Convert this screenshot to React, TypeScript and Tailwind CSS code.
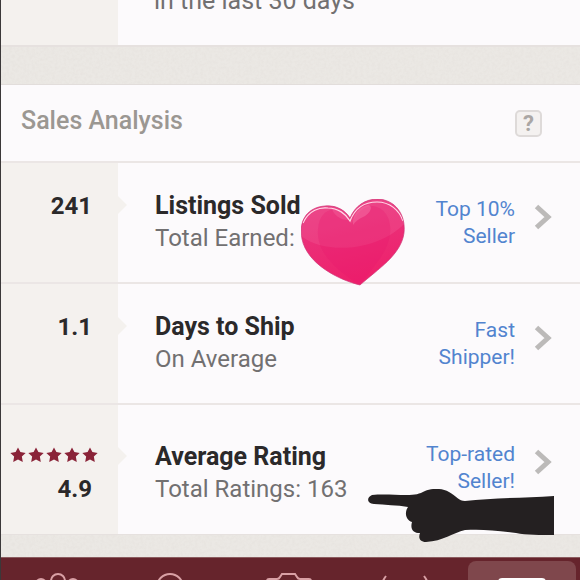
import type { ReactNode } from "react";
import clsx from "clsx";

type Stat = {
  value: string;
  stars?: number;
  title: string;
  detail: string;
  badge: [string, string];
  overlay?: ReactNode;
};

function Paper({ id, className }: { id: string; className: string }) {
  return (
    <div className={clsx("shrink-0 overflow-hidden bg-[#ebe8e4]", className)}>
      <svg className="block h-full w-full" aria-hidden="true">
        <filter id={id} x="0" y="0" width="100%" height="100%">
          <feTurbulence type="fractalNoise" baseFrequency="0.35" numOctaves="3" seed="4" />
          <feColorMatrix values="0 0 0 0 0.5  0 0 0 0 0.47  0 0 0 0 0.42  0.5 0 0 0 -0.17" />
        </filter>
        <rect width="100%" height="100%" filter={`url(#${id})`} opacity="0.3" />
      </svg>
    </div>
  );
}

function Star() {
  return (
    <svg viewBox="0 0 20 20" className="size-4" fill="#8a2338" aria-hidden="true">
      <path d="M10 .5l3 5.9 6.6 1-4.8 4.6 1.2 6.8-6-3.2-6 3.2 1.2-6.8L.4 7.4l6.6-1z" />
    </svg>
  );
}

function Chevron() {
  return (
    <svg viewBox="0 0 18 26" className="mb-3 h-[26px] w-[18px] shrink-0" fill="none" aria-hidden="true">
      <path d="M2.5 2.5L14 13 2.5 23.5" stroke="#bcbab9" strokeWidth="5" />
    </svg>
  );
}

function Heart() {
  return (
    <svg viewBox="0 0 104 87" className="absolute top-9 left-[183px] h-[87px] w-[104px]" aria-hidden="true">
      <defs>
        <linearGradient id="heart" x1="0" y1="0" x2="0.3" y2="1">
          <stop offset="0" stopColor="#e83b82" />
          <stop offset="1" stopColor="#ee216c" />
        </linearGradient>
        <clipPath id="heart-shape">
          <path d="M59 86C38 81 6 65 1 40C-3 20 8 8 24 7C35 6 44 11 49 19C54 7 64 0 77 0C94 1 105 15 103 34C100 56 77 70 59 86Z" />
        </clipPath>
      </defs>
      <g clipPath="url(#heart-shape)">
        <rect width="104" height="87" fill="url(#heart)" />
        <path d="M0 37C26 57 79 51 104 24V0H0Z" fill="#f477a8" opacity="0.22" />
        <path d="M59 86C33 70 15 52 17 30C18 17 25 11 31 11C40 11 47 18 51 25C55 14 63 7 72 7C84 9 91 20 89 35C87 53 73 67 59 86Z" fill="#e6156a" opacity="0.25" />
        <path d="M52 26C51 16 58 8 67 6C73 7 69 15 62 18C57 20 54 23 52 26Z" fill="#fa8db7" opacity="0.35" />
        <path d="M31 10C38 9 43 13 47 21C39 21 33 16 31 10Z" fill="#fa8db7" opacity="0.22" />
        <path d="M2 24C8 11 19 8 27 9C37 9 45 15 49 22C54 9 64 3 76 3C89 3 98 11 102 22" fill="none" stroke="#ffd9e8" strokeWidth="1.2" />
      </g>
      <path d="M59 86C38 81 6 65 1 40C-3 20 8 8 24 7C35 6 44 11 49 19C54 7 64 0 77 0C94 1 105 15 103 34C100 56 77 70 59 86Z" fill="none" stroke="#cf3877" strokeWidth="0.7" />
    </svg>
  );
}

function PointingHand() {
  return (
    <svg viewBox="0 0 186 53" className="absolute top-[84px] left-[250px] h-[53px] w-[186px]" fill="#242021" aria-hidden="true">
      <path d="M4 6C15 5 27 6 38 6C48 6 51 5 57 2C64-1 74-1 81 3C88 7 91 12 97 12C123 9 155 9 186 7V46C173 46 158 46 148 44C128 41 111 40 97 41C85 44 75 52 58 53C52 53 50 49 52 44C45 44 42 40 44 33C38 31 36 24 40 18C29 16 17 16 6 15C-2 14-1 8 4 6Z" />
    </svg>
  );
}

const stats: Stat[] = [
  { value: "241", title: "Listings Sold", detail: "Total Earned:", badge: ["Top 10%", "Seller"], overlay: <Heart /> },
  { value: "1.1", title: "Days to Ship", detail: "On Average", badge: ["Fast", "Shipper!"] },
  {
    value: "4.9",
    stars: 5,
    title: "Average Rating",
    detail: "Total Ratings: 163",
    badge: ["Top-rated", "Seller!"],
    overlay: <PointingHand />,
  },
];

function StatRow({ value, stars, title, detail, badge, overlay }: Stat) {
  return (
    <li className={clsx("flex", stars ? "h-[129px]" : "h-[121px] border-b-2 border-[#ebe6e5]")}>
      <div
        className={clsx(
          "flex w-[117px] shrink-0 flex-col bg-[#f4f1ee] text-right text-2xl leading-8 font-bold text-[#2b292a]",
          stars ? "pt-9" : "pt-[27px]",
        )}
      >
        {stars && (
          <span className="flex h-8 items-center justify-end gap-0.5 pr-5 pb-1">
            {Array.from({ length: stars }, (_, i) => (
              <Star key={i} />
            ))}
          </span>
        )}
        <span className="pr-[26px]">{value}</span>
      </div>
      <div className={clsx("relative flex min-w-0 flex-1 pr-7", stars ? "pt-9" : "pt-[27px]")}>
        <svg viewBox="0 0 9 18" className="mt-1.5 h-[18px] w-[9px] shrink-0" fill="#f4f1ee" aria-hidden="true">
          <path d="M0 0l9 9-9 9z" />
        </svg>
        <div className="ml-7 flex-1 leading-8 whitespace-nowrap">
          <h3 className="text-[25px] leading-8 font-bold text-[#2b292a]">{title}</h3>
          <p className="text-2xl leading-[33px] text-[#727071]">{detail}</p>
        </div>
        <a
          href="#details"
          className={clsx(
            "flex items-center gap-[19px] self-start text-right text-[21px] leading-[27px] text-[#5284cf]",
            !stars && "pt-1.5",
          )}
        >
          <span>
            {badge[0]}
            <br />
            {badge[1]}
          </span>
          <Chevron />
        </a>
        {overlay}
      </div>
    </li>
  );
}

const tabs = [
  {
    name: "Community",
    icon: (
      <>
        <circle cx="32" cy="9" r="7" />
        <circle cx="15" cy="12" r="5" />
        <circle cx="47" cy="12" r="5" />
      </>
    ),
  },
  { name: "Search", icon: <circle cx="28" cy="15" r="13" /> },
  { name: "Sell", icon: <path d="M10 30V9q0-2 2-2h8q2 0 3-2l2-3h13l2 3q1 2 3 2h9q2 0 2 2v21" /> },
  { name: "News", icon: <path d="M13 4Q5 14 13 25M51 4q8 10 0 21" /> },
];

export default function App() {
  return (
    <main className="flex h-screen flex-col overflow-hidden border-l border-[#3b3839] bg-[#fcfafc] font-[Roboto,sans-serif]">
      <section className="flex h-[47px] shrink-0 items-end overflow-hidden border-b-2 border-[#e6e1df]">
        <div className="h-full w-[117px] shrink-0 bg-[#f4f1ee]" />
        <p className="pb-7 pl-9 text-[25px] leading-8 text-[#727071]">in the last 30 days</p>
      </section>
      <Paper id="paper-top" className="h-[37px]" />

      <section className="shrink-0 border-t border-[#e2dddb]">
        <header className="flex h-[78px] items-center justify-between border-b-2 border-[#ebe6e5] pr-[38px] pl-5">
          <h2 className="pb-1 text-[25px] leading-8 font-medium text-[#9b9792]">Sales Analysis</h2>
          <button
            type="button"
            aria-label="Help"
            className="size-[27px] rounded-[5px] border-2 border-[#dedad9] bg-[#f4f1f0] text-[22px] leading-[23px] font-bold text-[#aaa6a4]"
          >
            ?
          </button>
        </header>
        <ul>
          {stats.map((stat) => (
            <StatRow key={stat.title} {...stat} />
          ))}
        </ul>
      </section>

      <Paper id="paper-bottom" className="h-[23px] border-t border-[#e6e1df]" />
      <nav className="grid h-24 shrink-0 grid-cols-5 border-t border-[#8b5c5f] bg-[#66242c]">
        {tabs.map(({ name, icon }) => (
          <button key={name} type="button" aria-label={name} className="flex justify-center pt-[14px]">
            <svg viewBox="0 0 66 40" className="h-10 w-[66px]" fill="none" stroke="#d9a0a5" strokeWidth="2">
              {icon}
            </svg>
          </button>
        ))}
        <button type="button" aria-label="Account" className="flex px-1 pt-[3px]">
          <span className="flex h-20 flex-1 justify-center rounded-lg bg-[#7f474c] pt-[17px]">
            <span className="h-10 w-[48px] rounded-sm bg-white" />
          </span>
        </button>
      </nav>
    </main>
  );
}
